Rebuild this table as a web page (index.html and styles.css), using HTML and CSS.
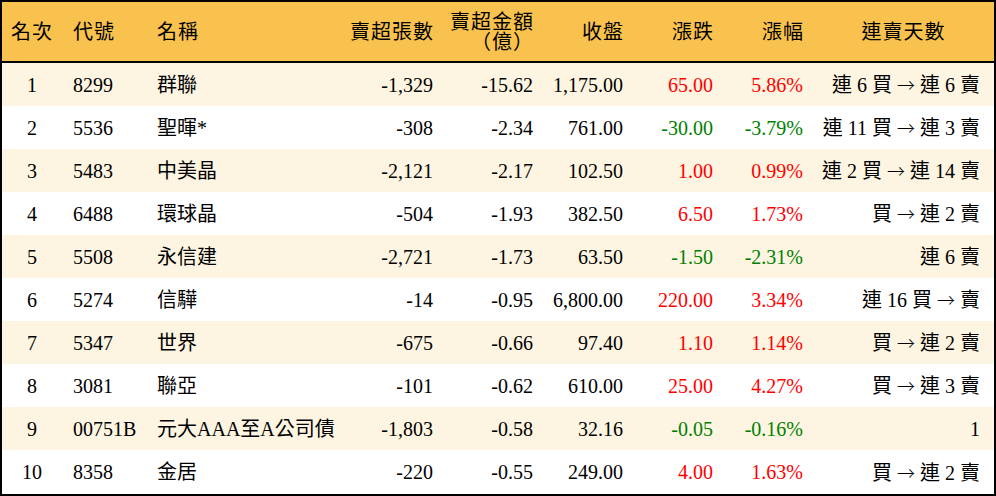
FILE: index.html
```html
<!DOCTYPE html>
<html lang="zh-Hant">
<head>
<meta charset="utf-8">
<title>賣超排行</title>
<link rel="stylesheet" href="styles.css">
</head>
<body>
<div class="frame">
<table class="rank">
  <colgroup>
    <col class="c-rank"><col class="c-code"><col class="c-name"><col class="c-vol"><col class="c-amt"><col class="c-close"><col class="c-chg"><col class="c-pct"><col class="c-days">
  </colgroup>
  <thead>
    <tr>
      <th class="ctr">名次</th>
      <th class="lft">代號</th>
      <th class="lft">名稱</th>
      <th class="rgt">賣超張數</th>
      <th class="rgt two">賣超金額<br>（億）</th>
      <th class="rgt">收盤</th>
      <th class="rgt">漲跌</th>
      <th class="rgt">漲幅</th>
      <th class="ctr days-h">連賣天數</th>
    </tr>
  </thead>
  <tbody>
    <tr class="odd"><td class="ctr">1</td><td class="lft">8299</td><td class="lft">群聯</td><td class="rgt">-1,329</td><td class="rgt">-15.62</td><td class="rgt">1,175.00</td><td class="rgt up">65.00</td><td class="rgt up">5.86%</td><td class="rgt days">連 6 買 <span class="arr">→</span> 連 6 賣</td></tr>
    <tr><td class="ctr">2</td><td class="lft">5536</td><td class="lft">聖暉*</td><td class="rgt">-308</td><td class="rgt">-2.34</td><td class="rgt">761.00</td><td class="rgt down">-30.00</td><td class="rgt down">-3.79%</td><td class="rgt days">連 11 買 <span class="arr">→</span> 連 3 賣</td></tr>
    <tr class="odd"><td class="ctr">3</td><td class="lft">5483</td><td class="lft">中美晶</td><td class="rgt">-2,121</td><td class="rgt">-2.17</td><td class="rgt">102.50</td><td class="rgt up">1.00</td><td class="rgt up">0.99%</td><td class="rgt days">連 2 買 <span class="arr">→</span> 連 14 賣</td></tr>
    <tr><td class="ctr">4</td><td class="lft">6488</td><td class="lft">環球晶</td><td class="rgt">-504</td><td class="rgt">-1.93</td><td class="rgt">382.50</td><td class="rgt up">6.50</td><td class="rgt up">1.73%</td><td class="rgt days">買 <span class="arr">→</span> 連 2 賣</td></tr>
    <tr class="odd"><td class="ctr">5</td><td class="lft">5508</td><td class="lft">永信建</td><td class="rgt">-2,721</td><td class="rgt">-1.73</td><td class="rgt">63.50</td><td class="rgt down">-1.50</td><td class="rgt down">-2.31%</td><td class="rgt days">連 6 賣</td></tr>
    <tr><td class="ctr">6</td><td class="lft">5274</td><td class="lft">信驊</td><td class="rgt">-14</td><td class="rgt">-0.95</td><td class="rgt">6,800.00</td><td class="rgt up">220.00</td><td class="rgt up">3.34%</td><td class="rgt days">連 16 買 <span class="arr">→</span> 賣</td></tr>
    <tr class="odd"><td class="ctr">7</td><td class="lft">5347</td><td class="lft">世界</td><td class="rgt">-675</td><td class="rgt">-0.66</td><td class="rgt">97.40</td><td class="rgt up">1.10</td><td class="rgt up">1.14%</td><td class="rgt days">買 <span class="arr">→</span> 連 2 賣</td></tr>
    <tr><td class="ctr">8</td><td class="lft">3081</td><td class="lft">聯亞</td><td class="rgt">-101</td><td class="rgt">-0.62</td><td class="rgt">610.00</td><td class="rgt up">25.00</td><td class="rgt up">4.27%</td><td class="rgt days">買 <span class="arr">→</span> 連 3 賣</td></tr>
    <tr class="odd"><td class="ctr">9</td><td class="lft">00751B</td><td class="lft">元大AAA至A公司債</td><td class="rgt">-1,803</td><td class="rgt">-0.58</td><td class="rgt">32.16</td><td class="rgt down">-0.05</td><td class="rgt down">-0.16%</td><td class="rgt days">1</td></tr>
    <tr class="last"><td class="ctr">10</td><td class="lft">8358</td><td class="lft">金居</td><td class="rgt">-220</td><td class="rgt">-0.55</td><td class="rgt">249.00</td><td class="rgt up">4.00</td><td class="rgt up">1.63%</td><td class="rgt days">買 <span class="arr">→</span> 連 2 賣</td></tr>
  </tbody>
</table>
</div>
</body>
</html>
```
FILE: styles.css
```css
html, body {
  margin: 0;
  padding: 0;
  background: #ffffff;
}
body {
  font-family: "Liberation Serif", "Noto Sans CJK TC", serif;
  font-size: 20px;
  color: #000000;
}
.frame {
  box-sizing: border-box;
  width: 996px;
  height: 496px;
  border: 2px solid #000000;
  background: #ffffff;
  overflow: hidden;
}
.rank {
  width: 992px;
  border-collapse: collapse;
  table-layout: fixed;
}
.c-rank { width: 60px; }
.c-code { width: 84px; }
.c-name { width: 197px; }
.c-vol { width: 100px; }
.c-amt { width: 100px; }
.c-close { width: 90px; }
.c-chg { width: 90px; }
.c-pct { width: 90px; }
.c-days { width: 181px; }

.rank th {
  background: #f9c24e;
  font-weight: normal;
  height: 59px;
  padding: 0;
  line-height: 20px;
  border-bottom: 2px solid #000000;
  white-space: nowrap;
  letter-spacing: 1px;
}
.rank td {
  height: 43px;
  padding: 0;
  line-height: 22px;
  white-space: nowrap;
}
.rank tr.last td { height: 44px; }
.rank tr.odd td { background: #fdf5e1; }

.ctr { text-align: center; }
.lft { text-align: left; padding-left: 11px !important; }
.rgt { text-align: right; padding-right: 10px !important; }
.rank th.ctr { padding: 0; }
.rank th.rgt { letter-spacing: 1px; padding-right: 9px !important; }
.rank th.days-h { padding: 0; }
.rank td.days { padding-right: 14px !important; }
.arr {
  font-family: "Noto Sans CJK TC", sans-serif;
  font-weight: 300;
  font-size: 18px;
}

.up { color: #ff0000; }
.down { color: #008000; }
```
